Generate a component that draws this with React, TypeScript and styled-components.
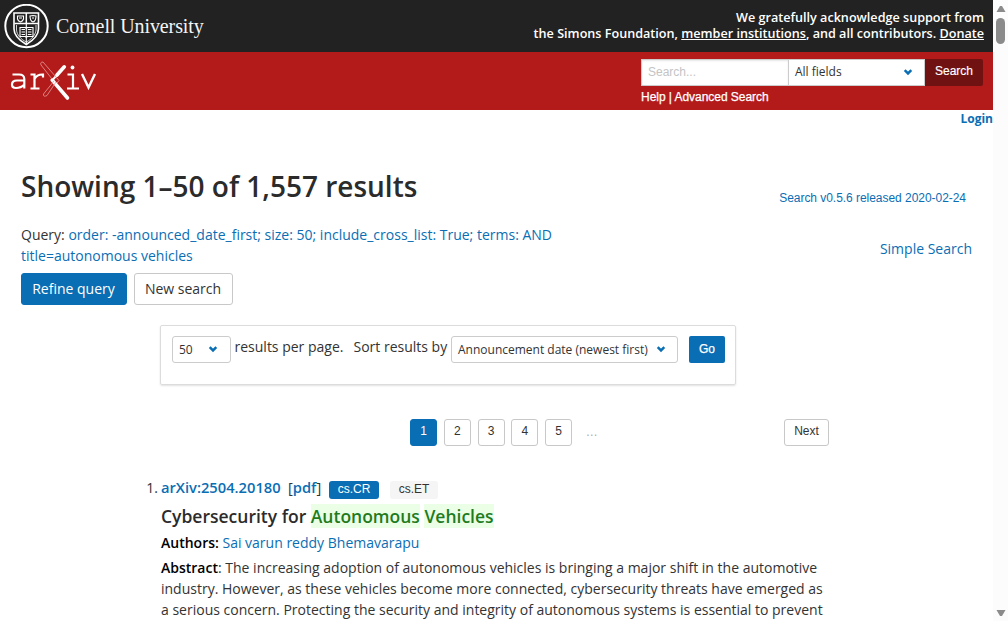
import React from "react";
import styled, { createGlobalStyle } from "styled-components";

const GlobalStyle = createGlobalStyle`
  * { box-sizing: border-box; }
  body { margin: 0; background: #fff; overflow: hidden; }
  a { text-decoration: none; color: inherit; }
`;
const sans = '"Open Sans", "Noto Sans", sans-serif';
const arial = '"Liberation Sans", Arial, sans-serif';
const blue = "#0a6eb4";

const Window = styled.div`
  display: flex; width: 1008px; height: 621px; overflow: hidden;
  font: 14px/21px ${sans}; color: #333;
`;
const Page = styled.div`width: 993px; height: 621px; overflow: hidden; flex: none;`;
const TopBar = styled.header`
  height: 52px; background: #222; display: flex; justify-content: space-between;
  padding: 4px 9px 0 4px;
`;
const Cornell = styled.div`
  display: flex; gap: 7px; height: 45px;
  svg { flex: none; }
`;
const CornellName = styled.span`
  font: 20px/45px "Liberation Serif", "Times New Roman", serif; color: #f5f5f5; letter-spacing: -0.1px; white-space: nowrap;
`;
const Support = styled.div`
  padding-top: 6px; text-align: right; color: #fff; font-size: 12.62px; line-height: 16px; font-weight: 600; white-space: nowrap;
  a { text-decoration: underline; }
`;
const Banner = styled.div`
  height: 58px; background: #b31b1b; display: flex; justify-content: space-between; padding: 7px 10px 0 8px;
`;
const SearchArea = styled.form`width: 342px; margin: 0;`;
const SearchRow = styled.div`display: flex; height: 27px;`;
const Field = styled.div`
  width: 148px; height: 27px; background: #fff; border: 1px solid #ccc; padding-left: 6px;
  font: 12px/24px ${arial}; color: #c4c4c4; box-shadow: inset 0 1px 2px rgba(10,10,10,.1);
`;
const Picker = styled.div<{ $w: number; $flat?: boolean; $right: number }>`
  width: ${p => p.$w}px; height: 27px; background: #fff; border: 1px solid #ccc; flex: none;
  border-radius: ${p => (p.$flat ? 0 : 3)}px; ${p => p.$flat && "border-left: 0;"}
  padding: 0 ${p => p.$right}px 0 6px; font-size: 12px; line-height: ${p => (p.$flat ? 24 : 26)}px; color: #333; white-space: nowrap;
  display: flex; justify-content: space-between;
  svg { margin-top: 9px; flex: none; }
`;
const SearchButton = styled.div`
  width: 58px; height: 27px; background: #701112; color: #fff; border-radius: 0 2px 2px 0;
  font: 12px/24px ${arial}; text-align: center; -webkit-text-stroke: 0.15px #fff;
`;
const Help = styled.div`font: 12px/22px ${arial}; color: #fff; white-space: nowrap; letter-spacing: -0.04px; -webkit-text-stroke: 0.25px #fff;`;
const Login = styled.div`
  height: 18px; text-align: right; font-size: 12px; line-height: 18px; font-weight: 700; color: ${blue};
`;
const Intro = styled.section`
  display: flex; justify-content: space-between; height: 197px; padding: 36px 21px 0 21px;
`;
const Heading = styled.h1`
  margin: 0; font-size: 28px; line-height: 44px; font-weight: 600; color: #2b2b2b; white-space: nowrap;
`;
const Query = styled.div`
  margin-top: 16px; width: 560px; white-space: nowrap;
  span { color: ${blue}; }
`;
const Actions = styled.div`display: flex; gap: 7px; margin-top: 7px;`;
const Button = styled.div<{ $primary?: boolean; $w: number }>`
  width: ${p => p.$w}px; height: 32px; border-radius: 3px; text-align: center; line-height: 30px; padding-right: 1px;
  border: 1px solid ${p => (p.$primary ? blue : "#c8c8c8")};
  background: ${p => (p.$primary ? blue : "#fff")}; color: ${p => (p.$primary ? "#fff" : "#333")};
`;
const Version = styled.div`
  font: 12px/20px ${arial}; color: ${blue}; padding: 24px 6px 0 0; white-space: nowrap; letter-spacing: -0.04px;
`;
const Simple = styled.div`margin-top: 30px; color: ${blue}; text-align: right;`;
const SortBox = styled.section`
  width: 576px; height: 60px; margin-left: 160px; padding: 10px 10px 0 11px; display: flex;
  border: 1px solid #dcdcdc; border-radius: 2px; box-shadow: 0 1px 2px rgba(10,10,10,.12);
  white-space: nowrap;
`;
const SortText = styled.span<{ $w: number; $pad: number }>`width: ${p => p.$w}px; padding-left: ${p => p.$pad}px; flex: none;`;
const Go = styled.div`
  width: 36px; height: 27px; margin-left: 11px; background: ${blue}; color: #fff; border-radius: 2px;
  font: 12px/26px ${arial}; text-align: center; -webkit-text-stroke: 0.25px #fff;
`;
const Pager = styled.nav`display: flex; gap: 6.75px; margin: 34px 0 0 410px; height: 27px; width: 419px;`;
const PageLink = styled.a<{ $current?: boolean; $w?: number }>`
  width: ${p => p.$w || 27}px; height: 27px; border-radius: 3px; text-align: center; font: 12px/23px ${arial};
  border: 1px solid ${p => (p.$current ? blue : "#c8c8c8")}; flex: none;
  background: ${p => (p.$current ? blue : "#fff")}; color: ${p => (p.$current ? "#fff" : "#333")};
`;
const Dots = styled.span`color: #aaa; font: 12px/27px ${arial}; padding-left: 7px; flex: 1;`;
const Result = styled.article`display: flex; margin-top: 31px; white-space: nowrap;`;
const Index = styled.div`width: 161px; padding-right: 3px; text-align: right; flex: none;`;
const IdRow = styled.div`
  display: flex; height: 21px; font-size: 14.7px; color: ${blue};
  b { font-weight: 600; }
`;
const IdLink = styled.b`width: 127px;`;
const Pdf = styled.span`width: 41px; color: #333; b { color: ${blue}; }`;
const Tag = styled.span<{ $primary?: boolean; $w: number }>`
  width: ${p => p.$w}px; height: 18px; margin: 4px 11px 0 0; border-radius: 3px; text-align: center; font: 12px/16px ${arial};
  background: ${p => (p.$primary ? blue : "#f5f5f5")}; color: ${p => (p.$primary ? "#fff" : "#333")};
`;
const Title = styled.p`
  margin: 5px 0 0; height: 27px; line-height: 27px; font-size: 17.5px; font-weight: 600; color: #2b2b2b; 
  mark { background: #ebffe6; color: #1e7b1e; padding: 0; }
`;
const Line = styled.p<{ $top?: number }>`
  margin: ${p => p.$top || 0}px 0 0; 
  b { font-weight: 600; color: #000; }
  a { color: ${blue}; }
`;
const Scrollbar = styled.aside`
  width: 15px; background: #fcfcfc; display: flex; flex-direction: column; align-items: center;
  padding: 5px 0 4px; justify-content: space-between;
`;
const ScrollTop = styled.div`display: flex; flex-direction: column; align-items: center; gap: 5px;`;
const Thumb = styled.div`width: 9px; height: 26px; border-radius: 5px; background: #8b8b8b;`;

const Chevron = () => (
  <svg width="10" height="7" viewBox="0 0 10 7">
    <path d="M1.7 1.2L5 4.4L8.3 1.2" fill="none" stroke={blue} strokeWidth="2.5" />
  </svg>
);
const Seal = () => (
  <svg width="45" height="45" viewBox="0 0 45 45" fill="none" stroke="#fff">
    <circle cx="22.5" cy="22" r="21.2" strokeWidth="2" />
    <path d="M10 9H34.5V25C34.5 32 29 36.5 22.3 40.5C15.5 36.5 10 32 10 25Z" strokeWidth="1.6" />
    <path d="M10.5 19.5H34M22.3 9V19" strokeWidth="1.5" />
    <path d="M13.5 12H19.5V15Q19 17 16.5 18Q14 17 13.5 15ZM15 14H18" strokeWidth="1.1" />
    <path d="M26 12L29 11.5L32 12Q32 17 29 18Q26 17 26 12ZM28 14H30" strokeWidth="1.1" />
    <path d="M16 23.5H21.3L22.3 24.5L23.3 23.5H29V32.5H23.3L22.3 33.5L21.3 32.5H16ZM22.3 20V40M17.5 25.5H21M17.5 28H21M17.5 30.5H21M23.8 25.5H27.5M23.8 28H27.5M23.8 30.5H27.5" strokeWidth="1.1" />
    <path d="M12.5 21V26C13 31 16.5 35 22.3 38C28 35 31.5 31 32 26V21" strokeWidth=".8" />
  </svg>
);
const ArxivLogo = () => (
  <svg width="90" height="43" viewBox="8 59 90 43" fill="none" stroke="#fff">
    <path d="M12.5 74.5H19Q24.3 74.5 24.3 79V88.5M24.3 80.5H17Q12 80.5 12 84.5Q12 88 16 88Q21 88 24.3 84.5" strokeWidth="2.2" />
    <path d="M30.5 74.5H34.5V88M30.5 88.5H39.5M34.5 79Q37 74.2 43 74.5V77.5" strokeWidth="2.2" />
    <path d="M67.5 74.5H73V88M67 88.5H79" strokeWidth="2.2" />
    <circle cx="72.5" cy="67.5" r="1.9" fill="#fff" stroke="none" />
    <path d="M82 74L88.5 87.5L95 74" strokeWidth="2.4" />
    <path d="M64.3 66.8L57 75" strokeWidth="3.6" strokeLinecap="round" />
    <path d="M52.2 80.2L67.5 98" strokeWidth="3.6" strokeLinecap="round" />
    <path d="M57 75L52 80.5" strokeWidth="2" />
    <path d="M41 65Q39.8 62 43 62L59 80.5L57 83M41 65L52 79M56 82L47 95.5Q43 97.5 43.5 94L54 81" stroke="#e79a9a" strokeWidth=".8" />
  </svg>
);
const Arrow = ({ down }: { down?: boolean }) => (
  <svg width="10" height="8" viewBox="0 0 10 8">
    <path d={down ? "M.5 1H9.5L6 7H4Z" : "M.5 7H9.5L6 1H4Z"} fill="#8b8b8b" />
  </svg>
);

export default function App() {
  return (
    <Window>
      <GlobalStyle />
      <Page>
        <TopBar>
          <Cornell><Seal /><CornellName>Cornell University</CornellName></Cornell>
          <Support>
            We gratefully acknowledge support from<br />
            the Simons Foundation, <a href="#">member institutions</a>, and all contributors. <a href="#">Donate</a>
          </Support>
        </TopBar>
        <Banner>
          <ArxivLogo />
          <SearchArea>
            <SearchRow>
              <Field>Search...</Field>
              <Picker $w={136} $flat $right={11}>All fields<Chevron /></Picker>
              <SearchButton>Search</SearchButton>
            </SearchRow>
            <Help>Help | Advanced Search</Help>
          </SearchArea>
        </Banner>
        <Login>Login</Login>
        <Intro>
          <div>
            <Heading>Showing 1–50 of 1,557 results</Heading>
            <Query>
              Query: <span>order: -announced_date_first; size: 50; include_cross_list: True; terms: AND<br />title=autonomous vehicles</span>
            </Query>
            <Actions><Button $primary $w={106}>Refine query</Button><Button $w={99}>New search</Button></Actions>
          </div>
          <div>
            <Version>Search v0.5.6 released 2020-02-24</Version>
            <Simple>Simple Search</Simple>
          </div>
        </Intro>
        <SortBox>
          <Picker $w={59} $right={12}>50<Chevron /></Picker>
          <SortText $w={122} $pad={3.5}>results per page.</SortText>
          <SortText $w={98} $pad={0.5}>Sort results by</SortText>
          <Picker $w={227} $right={11}>Announcement date (newest first)<Chevron /></Picker>
          <Go>Go</Go>
        </SortBox>
        <Pager>
          <PageLink $current>1</PageLink><PageLink>2</PageLink><PageLink>3</PageLink><PageLink>4</PageLink><PageLink>5</PageLink>
          <Dots>…</Dots>
          <PageLink $w={45}>Next</PageLink>
        </Pager>
        <Result>
          <Index>1.</Index>
          <div>
            <IdRow>
              <IdLink>arXiv:2504.20180</IdLink>
              <Pdf>[<b>pdf</b>]</Pdf>
              <Tag $primary $w={50}>cs.CR</Tag><Tag $w={48}>cs.ET</Tag>
            </IdRow>
            <Title>Cybersecurity for <mark>Autonomous</mark> <mark>Vehicles</mark></Title>
            <Line $top={2}><b>Authors:</b> <a href="#">Sai varun reddy Bhemavarapu</a></Line>
            <Line $top={4}>
              <b>Abstract</b>: The increasing adoption of autonomous vehicles is bringing a major shift in the automotive<br />
              industry. However, as these vehicles become more connected, cybersecurity threats have emerged as<br />
              a serious concern. Protecting the security and integrity of autonomous systems is essential to prevent
            </Line>
          </div>
        </Result>
      </Page>
      <Scrollbar>
        <ScrollTop><Arrow /><Thumb /></ScrollTop>
        <Arrow down />
      </Scrollbar>
    </Window>
  );
}
